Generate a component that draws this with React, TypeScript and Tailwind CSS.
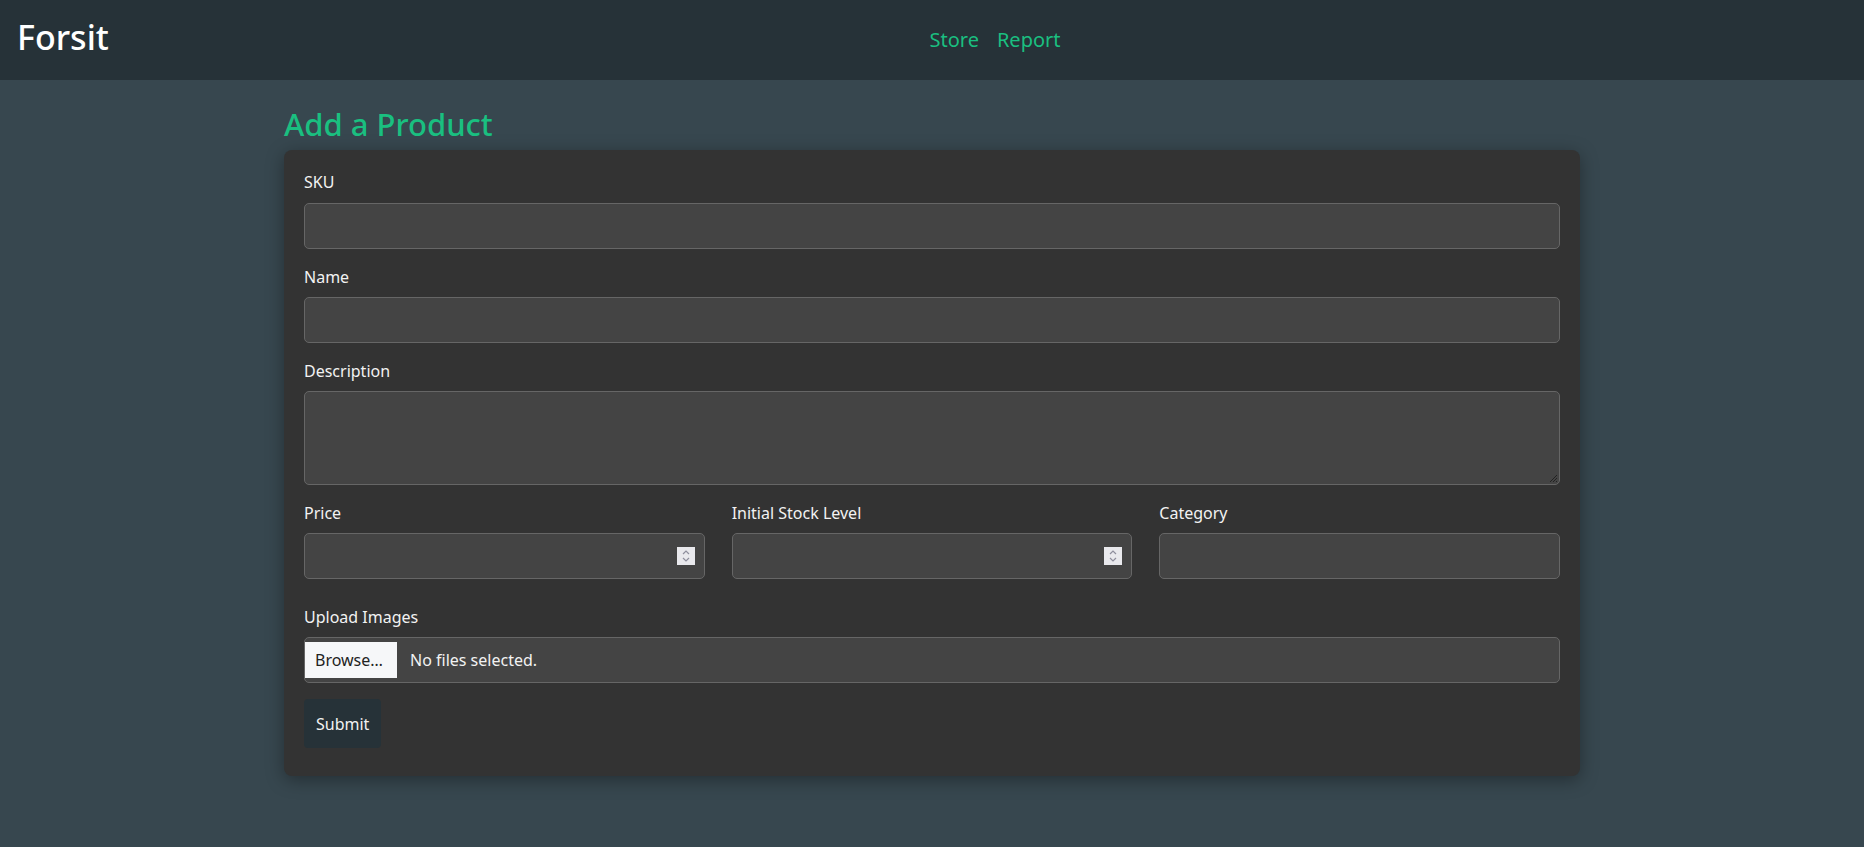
import React from "react";

function Spinner() {
  return (
    <div className="absolute right-[10px] top-1/2 -translate-y-1/2 w-[18px] h-[18px] bg-[#e9e9ed] flex items-center justify-center">
      <svg width="10" height="14" viewBox="0 0 10 14" fill="none" stroke="#8f8f9d" strokeWidth="1.2">
        <path d="M2 5 L5 2 L8 5" />
        <path d="M2 9 L5 12 L8 9" />
      </svg>
    </div>
  );
}

const inputCls =
  "w-full h-[46px] bg-[#444444] border border-[#666666] rounded-[5px] px-3 text-[16px] text-white outline-none";

export default function App() {
  return (
    <div className="min-h-screen bg-[#37474f] font-['Noto_Sans',sans-serif] text-[#f2f2f2]">
      <header className="h-[80px] bg-[#263238] flex items-center pl-[17px]">
        <div className="w-[109px] text-[34px] font-medium leading-none text-white mb-[7px]">Forsit</div>
        <nav className="flex-1 flex justify-center gap-[18px] text-[20px] text-[#1abf80]">
          <a href="#">Store</a>
          <a href="#">Report</a>
        </nav>
      </header>
      <main className="w-[1296px] mx-auto">
        <h1 className="pt-[26px] text-[31px] font-medium leading-[36px] text-[#1abf80] mb-[8px]">Add a Product</h1>
        <div className="bg-[#333333] rounded-[8px] px-[20px] pt-[20px] pb-[28px] shadow-[0_4px_18px_rgba(0,0,0,0.35)]">
          <div className="mb-4">
            <label className="block text-[16px] leading-[24px] mb-[9px]">SKU</label>
            <input type="text" className={inputCls} />
          </div>
          <div className="mb-4">
            <label className="block text-[16px] leading-[24px] mb-2">Name</label>
            <input type="text" className={inputCls} />
          </div>
          <div className="mb-4">
            <label className="block text-[16px] leading-[24px] mb-2">Description</label>
            <div className="relative">
              <textarea className="block w-full h-[94px] bg-[#444444] border border-[#666666] rounded-[5px] px-3 py-2 text-[16px] text-white outline-none resize-none" />
              <svg className="absolute right-[2px] bottom-[2px]" width="10" height="10" viewBox="0 0 10 10" stroke="#222" strokeWidth="1">
                <path d="M9 2 L2 9 M9 5 L5 9 M9 8 L8 9" />
              </svg>
            </div>
          </div>
          <div className="grid grid-cols-3 gap-x-[27px] mb-[26px]">
            <div>
              <label className="block text-[16px] leading-[24px] mb-2">Price</label>
              <div className="relative">
                <input type="text" className={inputCls} />
                <Spinner />
              </div>
            </div>
            <div>
              <label className="block text-[16px] leading-[24px] mb-2">Initial Stock Level</label>
              <div className="relative">
                <input type="text" className={inputCls} />
                <Spinner />
              </div>
            </div>
            <div>
              <label className="block text-[16px] leading-[24px] mb-2">Category</label>
              <input type="text" className={inputCls} />
            </div>
          </div>
          <div className="mb-4">
            <label className="block text-[16px] leading-[24px] mb-2">Upload Images</label>
            <div className="h-[46px] bg-[#444444] border border-[#666666] rounded-[5px] flex items-center">
              <div className="ml-0 h-[36px] w-[92px] bg-[#f6f7f9] text-[#222] text-[16px] flex items-center pl-[10px]">Browse…</div>
              <span className="ml-[13px] text-[16px]">No files selected.</span>
            </div>
          </div>
          <button className="h-[49px] px-[12px] bg-[#263238] rounded-[4px] text-[16px] text-[#f2f2f2]">Submit</button>
        </div>
      </main>
    </div>
  );
}
